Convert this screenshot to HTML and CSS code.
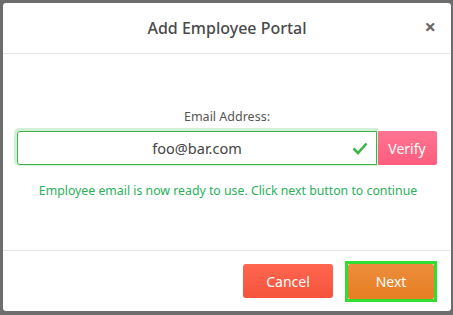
FILE: index.html
```html
<!DOCTYPE html>
<html>
<head>
<meta charset="utf-8">
<link rel="stylesheet" href="styles.css">
</head>
<body>
<div class="backdrop">
  <div class="modal">
    <div class="modal-header">
      <h2 class="title">Add Employee Portal</h2>
      <span class="close">&#215;</span>
    </div>
    <div class="modal-body">
      <label class="label">Email Address:</label>
      <div class="input-group">
        <div class="input-wrap">
          <span class="input-text">foo@bar.com</span>
          <svg class="check" width="16" height="14" viewBox="0 0 16 14"><path d="M1.5 7.5 L6 12 L14.5 2.5" fill="none" stroke="#3cb44a" stroke-width="2.6"/></svg>
        </div>
        <button class="verify">Verify</button>
      </div>
      <p class="message">Employee email is now ready to use. Click next button to continue</p>
    </div>
    <div class="modal-footer">
      <button class="btn cancel">Cancel</button>
      <div class="focus-ring"><button class="btn next">Next</button></div>
    </div>
  </div>
</div>
</body>
</html>
```
FILE: styles.css
```css
* { box-sizing: border-box; }
html, body { margin: 0; padding: 0; }
body {
  width: 453px;
  height: 315px;
  overflow: hidden;
  background: #6d6d6d;
  font-family: "Noto Sans", "Open Sans", sans-serif;
}
.backdrop {
  padding: 3px 2px 0 3px;
  height: 315px;
}
.modal {
  background: #fff;
  width: 448px;
  height: 308px;
  border-radius: 3px;
  display: flex;
  flex-direction: column;
}
.modal-header {
  height: 51px;
  border-bottom: 1px solid #e3e6ea;
  display: flex;
  align-items: center;
  justify-content: center;
  position: relative;
}
.title {
  margin: 0;
  font-size: 16px;
  font-weight: 500;
  color: #4a4a4a;
}
.close {
  position: absolute;
  right: 15px;
  top: 14px;
  font-size: 20px;
  font-weight: 700;
  color: #666;
  line-height: 20px;
}
.modal-body {
  height: 197px;
  border-bottom: 1px solid #e3e6ea;
  display: flex;
  flex-direction: column;
  align-items: center;
  padding-top: 55px;
}
.label {
  font-size: 12.5px;
  color: #555;
  line-height: 16px;
  margin-bottom: 6px;
}
.input-group {
  display: flex;
  width: 420px;
  height: 34px;
}
.input-wrap {
  flex: 1;
  border: 1px solid #3cb44a;
  border-radius: 3px 0 0 3px;
  box-shadow: -1px -1px 0 2px #d3efd6;
  display: flex;
  align-items: center;
  justify-content: center;
  position: relative;
}
.input-text {
  font-size: 14.5px;
  color: #444;
}
.check {
  position: absolute;
  right: 8px;
  top: 9px;
}
.verify {
  width: 60px;
  border: none;
  background: linear-gradient(#ff7592, #ff5c7e);
  color: #fff;
  font-family: inherit;
  font-size: 14px;
  padding: 0;
  border-radius: 0 2px 2px 0;
}
.message {
  margin: 17px 0 0;
  font-size: 12.3px;
  color: #2bb05a;
  padding-left: 2px;
}
.modal-footer {
  flex: 1;
  display: flex;
  justify-content: flex-end;
  align-items: center;
  gap: 12px;
  padding-right: 14px;
  padding-top: 0;
}
.btn {
  border: none;
  color: #fff;
  font-family: inherit;
  font-size: 14px;
  border-radius: 3px;
  height: 34px;
  width: 90px;
  padding: 0;
}
.cancel {
  background: linear-gradient(#ff6650, #f5533b);
}
.focus-ring {
  border: 3px solid #31dd31;
  padding: 0;
}
.next {
  background: linear-gradient(#ec8d3d, #e67e22);
  width: 86px;
  height: 35px;
  display: block;
  border-radius: 2px;
}
```
